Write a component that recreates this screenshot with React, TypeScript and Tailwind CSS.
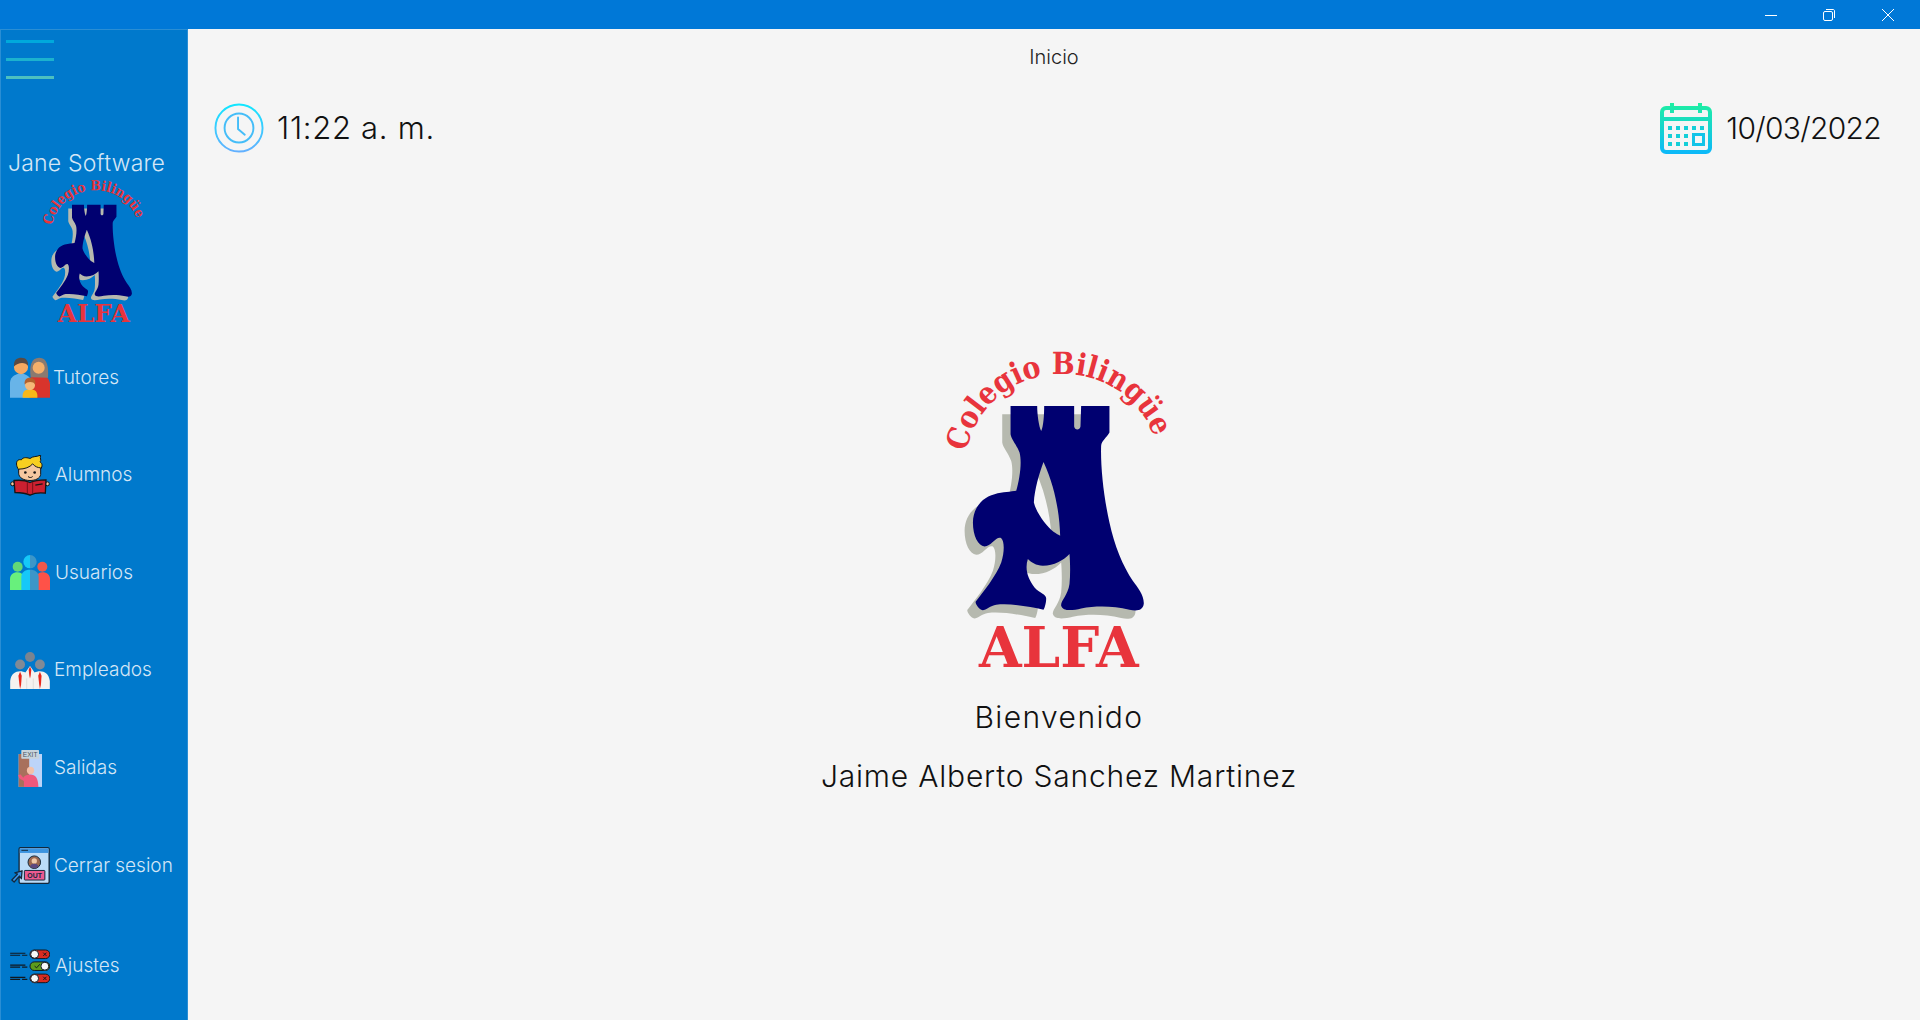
import React from "react";

const towerPath =
  "M333 200 L413 200 C413 225 418 262 425 275 C432 262 434 225 434 200 L524 200 L524 262 C526 274 541 274 543 262 L545 200 L630 200 L630 280 C622 295 606 305 605 320 C603 380 612 470 630 550 C645 620 670 680 700 725 C715 745 735 770 733 795 C730 815 712 817 690 812 C640 800 590 800 545 808 C520 814 490 818 485 800 C483 785 505 770 510 735 C513 705 512 670 510 645 C490 665 465 680 430 680 C410 680 395 670 385 660 C375 690 385 720 405 745 C420 762 440 765 440 778 C440 790 436 805 432 812 C390 802 330 792 290 797 C270 800 255 818 245 812 C235 806 228 795 228 788 C250 760 290 710 305 670 C315 640 315 605 305 597 C290 590 275 622 255 622 C235 620 220 590 220 550 C220 510 245 475 285 465 C310 458 335 458 350 455 C360 420 368 370 360 340 C352 318 335 300 333 285 Z M432 368 C420 400 405 450 403 490 C410 520 440 560 462 578 C470 584 478 588 482 590 C480 530 470 450 432 368 Z";

const AlfaLogo = ({ className, id }: { className: string; id: string }) => (
  <svg viewBox="140 35 680 955" className={`${className} overflow-visible`}>
    <path d={towerPath} transform="translate(-25 25)" fill="#b6b9af" fillRule="evenodd" />
    <path d={towerPath} fill="#000070" fillRule="evenodd" />
    <path id={id} d="M200 338 C262 30 715 20 778 345" fill="none" />
    <text
      fill="#e8343c"
      fontSize="92"
      fontWeight="700"
      fontFamily="'DejaVu Serif', serif"
    >
      <textPath href={`#${id}`} textLength="760" lengthAdjust="spacingAndGlyphs">
        Colegio Bilingüe
      </textPath>
    </text>
    <text
      x="238"
      y="985"
      fill="#e8343c"
      fontSize="166"
      fontWeight="700"
      fontFamily="'DejaVu Serif', serif"
      textLength="480"
      lengthAdjust="spacingAndGlyphs"
    >
      ALFA
    </text>
  </svg>
);

const TutoresIcon = () => (
  <svg viewBox="0 0 120 122" className="w-[40px] h-[41px]">
    <path d="M0 122 L0 75 C2 55 20 50 33 48 C48 50 62 58 64 75 L64 122 Z" fill="#68b4e8" />
    <path d="M58 122 L58 70 C62 55 76 52 90 52 C105 54 118 62 120 80 L120 122 Z" fill="#d8342c" />
    <path d="M62 60 C58 30 62 2 88 2 C112 2 116 30 114 62 Z" fill="#8a7a70" />
    <circle cx="86" cy="32" r="18" fill="#f5b06a" />
    <circle cx="33" cy="30" r="21" fill="#f5a860" />
    <path d="M12 28 C10 8 22 2 34 2 C48 2 56 12 54 26 C48 14 24 14 12 28 Z" fill="#5a4a42" />
    <path d="M38 122 C36 102 46 96 60 96 C74 96 84 102 82 122 Z" fill="#f8b818" />
    <circle cx="60" cy="84" r="15" fill="#f5b878" />
    <path d="M44 82 C42 66 52 62 60 62 C70 62 78 68 76 82 C70 72 52 72 44 82 Z" fill="#b4602c" />
  </svg>
);

const AlumnosIcon = () => (
  <svg viewBox="0 0 120 122" className="w-[40px] h-[41px]">
    <path d="M26 44 C14 26 20 10 34 14 C40 4 54 8 60 10 C70 2 78 6 92 0 C88 10 96 14 90 20 C100 26 96 38 90 44 Z" fill="#f8d020" stroke="#151515" strokeWidth="3" />
    <path d="M26 42 C44 42 60 36 68 26 C74 34 84 38 92 38 L92 58 C90 70 76 76 60 76 C42 76 26 68 26 54 Z" fill="#f5c8a0" stroke="#151515" strokeWidth="3" />
    <circle cx="46" cy="52" r="4" fill="#151515" />
    <circle cx="74" cy="52" r="4" fill="#151515" />
    <path d="M54 64 C58 68 64 68 68 64" fill="none" stroke="#151515" strokeWidth="3" />
    <circle cx="8" cy="86" r="6" fill="#f5c8a0" stroke="#151515" strokeWidth="3" />
    <circle cx="112" cy="86" r="6" fill="#f5c8a0" stroke="#151515" strokeWidth="3" />
    <path d="M12 76 C30 74 48 76 60 82 C72 76 90 74 108 74 L106 114 C90 112 72 114 60 120 C48 114 30 112 15 112 Z" fill="#cc2030" stroke="#151515" strokeWidth="4" />
    <path d="M52 80 L52 116 M68 80 L68 116" stroke="#7a1018" strokeWidth="3" />
    <path d="M76 90 L98 86" stroke="#151515" strokeWidth="4" />
  </svg>
);

const UsuariosIcon = () => (
  <svg viewBox="0 0 120 105" className="w-[40px] h-[35px]">
    <circle cx="23" cy="35" r="15" fill="#62d878" />
    <circle cx="97" cy="35" r="15" fill="#f0584c" />
    <path d="M0 105 L0 72 C0 60 10 52 22 52 C32 52 38 56 38 64 L38 105 Z" fill="#68f07c" />
    <path d="M120 105 L120 72 C120 60 110 52 98 52 C88 52 82 56 82 64 L82 105 Z" fill="#ff5248" />
    <path d="M60 0 A20 20 0 0 0 60 40 Z" fill="#16c8f8" />
    <path d="M60 0 A20 20 0 0 1 60 40 Z" fill="#3c96c8" />
    <path d="M60 44 C44 44 34 52 34 66 L34 105 L60 105 Z" fill="#16c8f8" />
    <path d="M60 44 C76 44 86 52 86 66 L86 105 L60 105 Z" fill="#3c96c8" />
  </svg>
);

const EmpleadosIcon = () => (
  <svg viewBox="0 0 120 112" className="w-[40px] h-[37px]">
    <circle cx="60" cy="15" r="15" fill="#7a8490" />
    <circle cx="30" cy="38" r="15" fill="#808a96" />
    <circle cx="90" cy="38" r="15" fill="#808a96" />
    <path d="M0 112 L0 88 C2 66 16 58 30 58 C36 58 42 60 46 62 L60 42 L74 62 C78 60 84 58 90 58 C104 58 118 66 120 88 L120 112 Z" fill="#f4f2f0" />
    <path d="M30 60 L25 72 L28 100 L30 112 L33 100 L35 72 Z" fill="#e8281c" />
    <path d="M90 60 L85 72 L88 100 L90 112 L93 100 L95 72 Z" fill="#e8281c" />
    <path d="M60 44 L56 54 L58 72 L60 80 L62 72 L64 54 Z" fill="#e8281c" />
    <path d="M50 80 L50 112 M70 80 L70 112" stroke="#d8d4d0" strokeWidth="2" />
  </svg>
);

const SalidasIcon = () => (
  <svg viewBox="0 0 73 112" className="w-[24px] h-[37px]">
    <rect x="2" y="12" width="71" height="100" fill="#bcd4f8" />
    <rect x="2" y="12" width="32" height="100" fill="#a8705c" />
    <rect x="10" y="0" width="54" height="26" rx="2" fill="#c8d4dc" />
    <text x="37" y="21" textAnchor="middle" fontSize="20" fontFamily="'Liberation Sans', sans-serif" fill="#4a5460">
      EXIT
    </text>
    <circle cx="38" cy="62" r="11" fill="#f4c0a8" />
    <path d="M0 76 L8 74 L16 84 C20 76 28 74 38 74 C52 74 62 84 62 112 L18 112 L18 94 L4 86 Z" fill="#f0587c" />
  </svg>
);

const CerrarIcon = () => (
  <svg viewBox="0 0 120 112" className="w-[40px] h-[37px]">
    <rect x="27" y="2" width="91" height="108" rx="4" fill="#bcdcf8" stroke="#12283c" strokeWidth="4" />
    <path d="M29 4 H116 V18 H29 Z" fill="#3c94e0" />
    <path d="M34 10 H54" stroke="#12283c" strokeWidth="3" />
    <circle cx="73" cy="46" r="19" fill="#9c6850" stroke="#12283c" strokeWidth="3" />
    <circle cx="73" cy="42" r="8" fill="#f0c8a8" />
    <path d="M60 58 C64 48 82 48 86 58 C80 66 66 66 60 58 Z" fill="#5c4880" />
    <rect x="43" y="71" width="62" height="29" rx="2" fill="#ec5a90" stroke="#12283c" strokeWidth="3" />
    <text x="74" y="93" textAnchor="middle" fontSize="21" fontWeight="700" fontFamily="'Liberation Sans', sans-serif" fill="#12283c">
      OUT
    </text>
    <path d="M5 100 L22 82 L14 78 L36 72 L34 96 L28 88 L12 106 Z" fill="#3c94e8" stroke="#12283c" strokeWidth="4" strokeLinejoin="round" />
  </svg>
);

const Toggle = ({ y, on }: { y: number; on: boolean }) => (
  <g>
    <path d={`M0 ${y - 3} H46 M0 ${y + 3} H30 M36 ${y + 3} H52`} stroke="#101820" strokeWidth="3.5" />
    <rect x="60" y={y - 13} width="60" height="26" rx="13" fill={on ? "#5c9c1c" : "#d82c20"} stroke="#101820" strokeWidth="3" />
    <circle cx={on ? 105 : 74} cy={y} r="12" fill="#f8f8f8" stroke="#101820" strokeWidth="3" />
    {on ? (
      <path d={`M74 ${y} L80 ${y + 5} L90 ${y - 6}`} fill="none" stroke="#101820" strokeWidth="3" />
    ) : (
      <path d={`M100 ${y - 5} L110 ${y + 5} M110 ${y - 5} L100 ${y + 5}`} stroke="#101820" strokeWidth="3" />
    )}
  </g>
);

const AjustesIcon = () => (
  <svg viewBox="0 0 120 106" className="w-[40px] h-[35px]">
    <Toggle y={16} on={false} />
    <Toggle y={52} on={true} />
    <Toggle y={89} on={false} />
  </svg>
);

const menuItems = [
  { label: "Tutores", icon: <TutoresIcon />, left: "pl-[9px]", gap: "gap-[3px]" },
  { label: "Alumnos", icon: <AlumnosIcon />, left: "pl-[9px]", gap: "gap-[5px]" },
  { label: "Usuarios", icon: <UsuariosIcon />, left: "pl-[9px]", gap: "gap-[5px]" },
  { label: "Empleados", icon: <EmpleadosIcon />, left: "pl-[9px]", gap: "gap-[4px]" },
  { label: "Salidas", icon: <SalidasIcon />, left: "pl-[17px]", gap: "gap-[12px]" },
  { label: "Cerrar sesion", icon: <CerrarIcon />, left: "pl-[9px]", gap: "gap-[4px]" },
  { label: "Ajustes", icon: <AjustesIcon />, left: "pl-[9px]", gap: "gap-[5px]" },
];

const Sidebar = () => (
  <aside className="w-[188px] shrink-0 bg-[#0079cc] border-t border-l border-r border-[#2a8ed4] flex flex-col overflow-hidden">
    {/* Menu button */}
    <div className="pl-[5px] pt-[10px] flex flex-col gap-[15px]">
      <div className="w-[48px] h-[3px] bg-[#00a9dc]" />
      <div className="w-[48px] h-[3px] bg-[#1cb2ce]" />
      <div className="w-[48px] h-[3px] bg-[#4cc0c0]" />
    </div>

    <p className="mt-[69px] pl-[7px] text-[23px] leading-[30px] tracking-[0.2px] font-light text-[#d4e6f6] whitespace-nowrap">
      Jane Software
    </p>
    <AlfaLogo id="arc-side" className="w-[102px] h-[143px] ml-[42px] mt-[2px] shrink-0" />

    <nav className="flex flex-col mt-[6px]">
      {menuItems.map((item) => (
        <div
          key={item.label}
          className={`h-[97.6px] flex items-center ${item.left} ${item.gap} text-[19px] font-light text-[#d4e6f6] whitespace-nowrap last:mt-[3px]`}
        >
          {item.icon}
          <span>{item.label}</span>
        </div>
      ))}
    </nav>
  </aside>
);

const ClockIcon = () => (
  <svg viewBox="0 0 52 52" className="w-[50px] h-[50px]">
    <defs>
      <linearGradient id="clock-grad" x1="0" y1="0" x2="0" y2="1">
        <stop offset="0" stopColor="#12e6ff" />
        <stop offset="1" stopColor="#62b0ff" />
      </linearGradient>
    </defs>
    <circle cx="26" cy="26" r="24.5" fill="none" stroke="url(#clock-grad)" strokeWidth="2" />
    <circle cx="26" cy="26" r="15" fill="none" stroke="#44bdf8" strokeWidth="2" />
    <path d="M25 15 V27 L32 33" fill="none" stroke="#44bdf8" strokeWidth="2" strokeLinecap="round" />
  </svg>
);

const CalendarIcon = () => (
  <svg viewBox="0 0 52 52" className="w-[52px] h-[52px]">
    <defs>
      <linearGradient id="cal-grad" gradientUnits="userSpaceOnUse" x1="0" y1="0" x2="0" y2="52">
        <stop offset="0" stopColor="#1ff0a0" />
        <stop offset="1" stopColor="#0cb8fa" />
      </linearGradient>
    </defs>
    <rect x="2" y="6" width="48" height="44" rx="4" fill="none" stroke="url(#cal-grad)" strokeWidth="4" />
    <path d="M2 17 H50" stroke="url(#cal-grad)" strokeWidth="4" />
    <path d="M10 1 H14 V11 H10 Z M38 1 H42 V11 H38 Z" fill="url(#cal-grad)" />
    <g fill="#14cfd8">
      <rect x="8" y="24" width="4" height="4" />
      <rect x="16" y="24" width="4" height="4" />
      <rect x="24" y="24" width="4" height="4" />
      <rect x="32" y="24" width="4" height="4" />
      <rect x="40" y="24" width="4" height="4" />
      <rect x="8" y="32" width="4" height="4" />
      <rect x="16" y="32" width="4" height="4" />
      <rect x="24" y="32" width="4" height="4" />
      <rect x="8" y="40" width="4" height="4" />
      <rect x="16" y="40" width="4" height="4" />
      <rect x="24" y="40" width="4" height="4" />
    </g>
    <rect x="33.5" y="32.5" width="10" height="10" fill="none" stroke="#12c4e8" strokeWidth="3" />
  </svg>
);

const WindowControls = () => (
  <div className="flex items-center pr-[3px] text-white">
    <button className="w-[58px] h-[29px] flex items-center justify-center">
      <svg viewBox="0 0 12 12" className="w-[12px] h-[12px]">
        <path d="M0 6.5 H12" stroke="currentColor" strokeWidth="1" />
      </svg>
    </button>
    <button className="w-[58px] h-[29px] flex items-center justify-center">
      <svg viewBox="0 0 12 12" className="w-[12px] h-[12px]">
        <rect x="0.5" y="2.5" width="9" height="9" rx="1.5" fill="none" stroke="currentColor" />
        <path d="M3 0.5 H10 C11 0.5 11.5 1 11.5 2 V9" fill="none" stroke="currentColor" />
      </svg>
    </button>
    <button className="w-[59px] h-[29px] flex items-center justify-center">
      <svg viewBox="0 0 12 12" className="w-[12px] h-[12px]">
        <path d="M0 0 L12 12 M12 0 L0 12" stroke="currentColor" strokeWidth="1" />
      </svg>
    </button>
  </div>
);

const App = () => {
  return (
    <div className="h-screen flex flex-col overflow-hidden bg-[#f5f5f5] font-['Inter','Lato',sans-serif]">
      <header className="h-[29px] shrink-0 bg-[#0078d7] flex justify-end">
        <WindowControls />
      </header>

      <div className="flex flex-1 min-h-0">
        <Sidebar />

        <main className="flex-1 flex flex-col">
          <h1 className="text-center text-[20px] leading-[24px] mt-[16px] text-[#222] font-light">
            Inicio
          </h1>

          <div className="h-[52px] flex items-center justify-between mt-[33px] pl-[26px] pr-[39px] text-[#111] font-light">
            <div className="flex items-center gap-[13px]">
              <ClockIcon />
              <span className="text-[31px] tracking-[0.7px]">11:22 a. m.</span>
            </div>
            <div className="flex items-center gap-[14px]">
              <CalendarIcon />
              <span className="text-[30px] tracking-[-0.7px]">10/03/2022</span>
            </div>
          </div>

          <div className="flex flex-col items-center pl-[10px] mt-[197px] text-[#111] font-light">
            <AlfaLogo id="arc-main" className="w-[227px] h-[318px]" />
            <p className="mt-[28px] text-[30px] leading-[40px] tracking-[1.4px]">Bienvenido</p>
            <p className="mt-[19px] text-[30px] leading-[40px] tracking-[0.8px]">
              Jaime Alberto Sanchez Martinez
            </p>
          </div>
        </main>
      </div>
    </div>
  );
};

export default App;
